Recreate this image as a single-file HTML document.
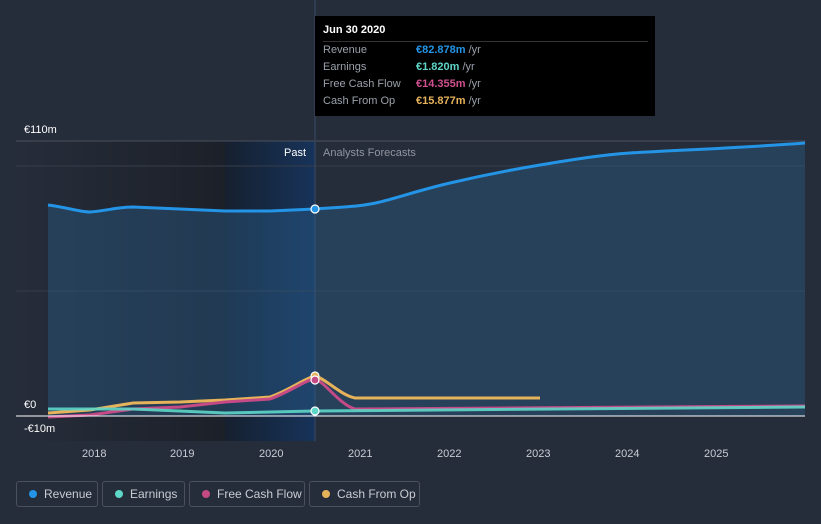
<!DOCTYPE html>
<html><head><style>
html,body{margin:0;background:#262d3a;font-family:"Liberation Sans",sans-serif;width:821px;height:524px;overflow:hidden;position:relative}
.t{position:absolute;font-size:11px;color:#fff;white-space:nowrap}
.leg{position:absolute;top:481px;height:26px;border:1px solid #4a505c;border-radius:3px;color:#c8ccd3;font-size:12px;line-height:25px;box-sizing:border-box;padding-left:27px;white-space:nowrap}
.leg i{position:absolute;left:12px;top:8px;width:8px;height:8px;border-radius:50%}
</style></head><body>
<svg width="821" height="524" style="position:absolute;left:0;top:0">
<defs>
<linearGradient id="past" x1="0" x2="1" y1="0" y2="0"><stop offset="0" stop-color="#262d3a"/><stop offset="1" stop-color="#1c2029"/></linearGradient>
<linearGradient id="hl" x1="0" x2="1"><stop offset="0" stop-color="#16202f"/><stop offset="1" stop-color="#17335a"/></linearGradient>
</defs>
<rect x="16" y="141" width="209" height="300" fill="url(#past)"/>
<rect x="225" y="141" width="90" height="300" fill="url(#hl)"/>
<line x1="16" y1="141" x2="805" y2="141" stroke="#4a505c"/>
<line x1="16" y1="166" x2="805" y2="166" stroke="#363d4a"/>
<line x1="16" y1="291" x2="805" y2="291" stroke="#363d4a"/>
<line x1="315" y1="0" x2="315" y2="441" stroke="#3a4a66"/>
<path d="M48,205 C70,208 80,212 90,212 C105,211 118,207 133,207 L180,209 L225,211 L270,211 L315,209 C340,207 360,207 380,202 C400,197 420,190 450,183 C480,176 510,170 540,165 C570,160 600,155 630,153 C680,150 740,148 805,143 L805,416 L48,416Z" fill="#2a5a85" fill-opacity="0.45"/>
<path d="M48,205 C70,208 80,212 90,212 C105,211 118,207 133,207 L180,209 L225,211 L270,211 L315,209 C340,207 360,207 380,202 C400,197 420,190 450,183 C480,176 510,170 540,165 C570,160 600,155 630,153 C680,150 740,148 805,143" fill="none" stroke="#2394e6" stroke-width="3"/>
<path d="M48,413 L90,410 L133,403 L180,402 L225,400 L270,397 C290,390 305,378 315,376 C325,378 340,395 355,398 L540,398" fill="none" stroke="#e6b25a" stroke-width="3"/>
<path d="M48,417 L90,415 L133,409 L180,407 L225,402 L270,399 C290,392 305,380 315,379 C325,382 340,405 355,409 L805,406" fill="none" stroke="#c44a86" stroke-width="3"/>
<path d="M48,409 L133,409 L225,413 L315,411 L805,407" fill="none" stroke="#5ed6c8" stroke-width="3" opacity="0.9"/>
<line x1="16" y1="416" x2="805" y2="416" stroke="#fff"/>
<circle cx="315" cy="209" r="4" fill="#2394e6" stroke="#fff" stroke-width="1.2"/>
<circle cx="315" cy="376" r="4" fill="#e6b25a" stroke="#fff" stroke-width="1.2"/>
<circle cx="315" cy="380" r="4" fill="#c44a86" stroke="#fff" stroke-width="1.2"/>
<circle cx="315" cy="411" r="4" fill="#5ed6c8" stroke="#fff" stroke-width="1.2"/>
</svg>
<div class="t" style="left:24px;top:124px">€110m</div>
<div class="t" style="left:24px;top:399px">€0</div>
<div class="t" style="left:24px;top:423px">-€10m</div>
<div class="t" style="left:284px;top:147px;font-size:11px">Past</div>
<div class="t" style="left:323px;top:147px;color:#8f95a0">Analysts Forecasts</div>
<div class="t" style="left:82px;top:448px;color:#c8ccd3">2018</div>
<div class="t" style="left:170px;top:448px;color:#c8ccd3">2019</div>
<div class="t" style="left:259px;top:448px;color:#c8ccd3">2020</div>
<div class="t" style="left:348px;top:448px;color:#c8ccd3">2021</div>
<div class="t" style="left:437px;top:448px;color:#c8ccd3">2022</div>
<div class="t" style="left:526px;top:448px;color:#c8ccd3">2023</div>
<div class="t" style="left:615px;top:448px;color:#c8ccd3">2024</div>
<div class="t" style="left:704px;top:448px;color:#c8ccd3">2025</div>
<div style="position:absolute;left:315px;top:16px;width:340px;height:100px;background:#000;font-size:11px;color:#9aa0aa">
<div style="position:absolute;left:8px;top:8px;color:#fff;font-weight:bold">Jun 30 2020</div>
<div style="position:absolute;left:8px;top:25px;width:325px;border-top:1px solid #333"></div>
<div style="position:absolute;left:8px;top:26px;line-height:17px">Revenue<br>Earnings<br>Free Cash Flow<br>Cash From Op</div>
<div style="position:absolute;left:101px;top:26px;line-height:17px;font-weight:bold"><span style="color:#2394e6">€82.878m</span> <span style="font-weight:normal">/yr</span><br><span style="color:#5ed6c8">€1.820m</span> <span style="font-weight:normal">/yr</span><br><span style="color:#d0508f">€14.355m</span> <span style="font-weight:normal">/yr</span><br><span style="color:#e6b25a">€15.877m</span> <span style="font-weight:normal">/yr</span></div>
</div>
<div class="leg" style="left:16px;width:82px"><i style="background:#2394e6"></i>Revenue</div>
<div class="leg" style="left:102px;width:83px"><i style="background:#5ed6c8"></i>Earnings</div>
<div class="leg" style="left:189px;width:116px"><i style="background:#c44a86"></i>Free Cash Flow</div>
<div class="leg" style="left:309px;width:111px"><i style="background:#e6b25a"></i>Cash From Op</div>
</body></html>
